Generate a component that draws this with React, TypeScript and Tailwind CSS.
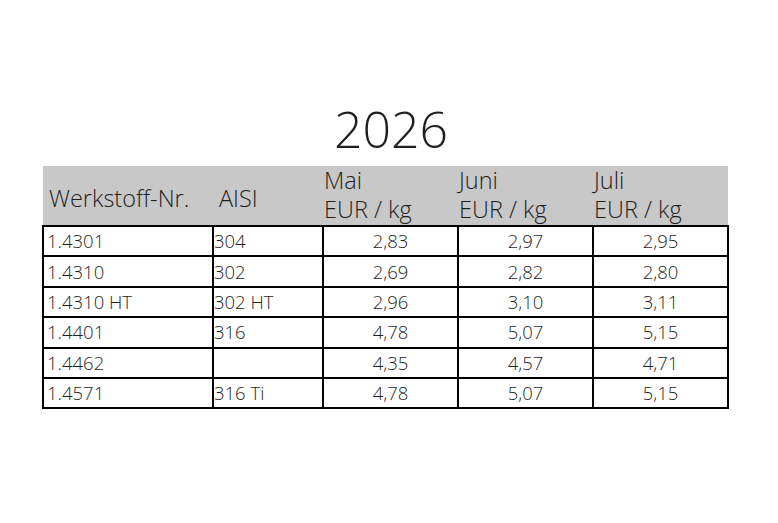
import React from "react";

const rows: [string, string, string, string, string][] = [
  ["1.4301", "304", "2,83", "2,97", "2,95"],
  ["1.4310", "302", "2,69", "2,82", "2,80"],
  ["1.4310 HT", "302 HT", "2,96", "3,10", "3,11"],
  ["1.4401", "316", "4,78", "5,07", "5,15"],
  ["1.4462", "", "4,35", "4,57", "4,71"],
  ["1.4571", "316 Ti", "4,78", "5,07", "5,15"],
];

export default function App() {
  return (
    <div
      className="w-[778px] h-[523px] bg-white text-[#1f1f1f] font-light"
      style={{ fontFamily: '"Open Sans", "Liberation Sans", sans-serif' }}
    >
      <div className="pt-[97px] flex justify-center">
        <div className="text-[50px] leading-[64px] pl-[4px]">2026</div>
      </div>
      <div className="pl-[42px] pt-[5px]">
        <table className="border-collapse table-fixed w-[685px]">
          <colgroup>
            <col className="w-[170px]" />
            <col className="w-[110px]" />
            <col className="w-[135px]" />
            <col className="w-[135px]" />
            <col className="w-[135px]" />
          </colgroup>
          <thead>
            <tr className="bg-[#c8c8c8] h-[60px] text-[23.5px]">
              <th className="font-light text-left align-middle pl-[6px] pt-[6px] whitespace-nowrap">Werkstoff-Nr.</th>
              <th className="font-light text-left align-middle pl-[6px] pt-[6px]">AISI</th>
              {["Mai", "Juni", "Juli"].map((m) => (
                <th key={m} className="font-light text-left align-top pl-[1px] leading-[29px] pt-0 whitespace-nowrap">
                  {m}
                  <br />
                  EUR / kg
                </th>
              ))}
            </tr>
          </thead>
          <tbody className="text-[18.5px]">
            {rows.map((r, i) => (
              <tr key={i} className="h-[30.4px]">
                <td className="border-2 border-black pl-[3px] leading-[28px]">{r[0]}</td>
                <td className="border-2 border-black pl-0 leading-[28px]">{r[1]}</td>
                <td className="border-2 border-black text-center leading-[28px]">{r[2]}</td>
                <td className="border-2 border-black text-center leading-[28px]">{r[3]}</td>
                <td className="border-2 border-black text-center leading-[28px]">{r[4]}</td>
              </tr>
            ))}
          </tbody>
        </table>
      </div>
    </div>
  );
}
